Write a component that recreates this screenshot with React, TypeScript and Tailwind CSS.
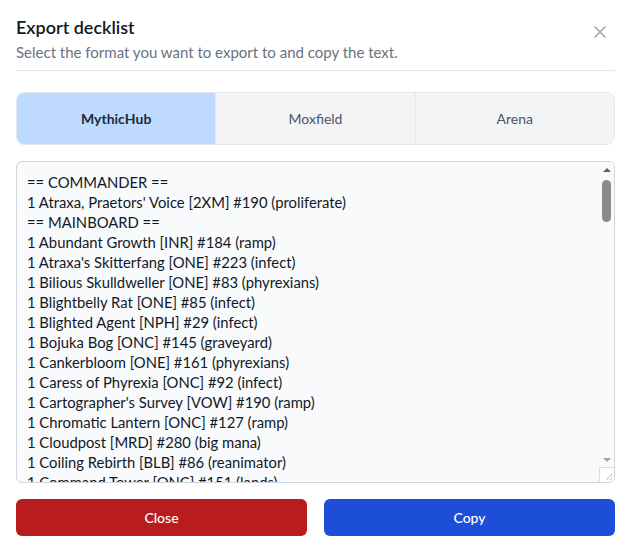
import { useEffect, useRef, useState } from "react";
import { X } from "lucide-react";

const lines = [
  "== COMMANDER ==",
  "1 Atraxa, Praetors' Voice [2XM] #190 (proliferate)",
  "== MAINBOARD ==",
  "1 Abundant Growth [INR] #184 (ramp)",
  "1 Atraxa's Skitterfang [ONE] #223 (infect)",
  "1 Bilious Skulldweller [ONE] #83 (phyrexians)",
  "1 Blightbelly Rat [ONE] #85 (infect)",
  "1 Blighted Agent [NPH] #29 (infect)",
  "1 Bojuka Bog [ONC] #145 (graveyard)",
  "1 Cankerbloom [ONE] #161 (phyrexians)",
  "1 Caress of Phyrexia [ONC] #92 (infect)",
  "1 Cartographer's Survey [VOW] #190 (ramp)",
  "1 Chromatic Lantern [ONC] #127 (ramp)",
  "1 Cloudpost [MRD] #280 (big mana)",
  "1 Coiling Rebirth [BLB] #86 (reanimator)",
  "1 Command Tower [ONC] #151 (lands)",
  "1 Contagion Clasp [SOM] #144 (proliferate)",
  "1 Contagion Engine [SOM] #145 (proliferate)",
  "1 Crawling Chorus [ONE] #7 (infect)",
  "1 Cultivate [ONC] #115 (ramp)",
  "1 Deep Analysis [ONC] #100 (draw)",
  "1 Drown in Ichor [ONE] #91 (removal)",
  "1 Evolution Sage [ONC] #116 (proliferate)",
  "1 Exotic Orchard [ONC] #153 (lands)",
  "1 Experimental Augury [ONE] #49 (proliferate)",
  "1 Flux Channeler [WAR] #52 (proliferate)",
  "1 Forest [ONE] #276 (lands)",
  "1 Forest [ONE] #277 (lands)",
  "1 Forest [ONE] #278 (lands)",
  "1 Fuel for the Cause [MOM] #57 (proliferate)",
  "1 Glistener Seer [ONE] #52 (infect)",
  "1 Glistening Deluge [ONE] #94 (removal)",
  "1 Glimmer Lens [ONE] #234 (draw)",
  "1 Grim Affliction [NPH] #60 (removal)",
  "1 Hydroid Krasis [RNA] #183 (draw)",
  "1 Ichor Rats [SOM] #67 (infect)",
  "1 Ichorclaw Myr [SOM] #171 (infect)",
  "1 Inexorable Tide [SOM] #35 (proliferate)",
  "1 Infectious Inquiry [ONE] #97 (infect)",
  "1 Island [ONE] #272 (lands)",
  "1 Island [ONE] #273 (lands)",
  "1 Karn's Bastion [WAR] #248 (lands)",
  "1 Llanowar Loamspeaker [DMU] #170 (ramp)",
  "1 Marsh Flats [ZEN] #219 (lands)",
  "1 Merciless Eviction [ONC] #142 (removal)",
  "1 Mindwhisker [ONE] #60 (infect)",
  "1 Myr Convert [ONE] #238 (ramp)",
  "1 Necrogen Communion [ONE] #101 (infect)",
  "1 Norn's Wellspring [ONE] #24 (draw)",
  "1 Opulent Palace [ONC] #156 (lands)",
  "1 Painful Truths [ONC] #103 (draw)",
  "1 Phyrexian Arena [ONE] #104 (draw)",
  "1 Phyrexian Swarmlord [NPH] #118 (infect)",
  "1 Plains [ONE] #267 (lands)",
  "1 Plaguemaw Beast [ONE] #174 (proliferate)",
  "1 Prologue to Phyresis [ONE] #63 (infect)",
  "1 Prairie Stream [ONC] #157 (lands)",
  "1 Rampant Growth [ONC] #122 (ramp)",
  "1 Sandsteppe Citadel [ONC] #159 (lands)",
  "1 Skrelv, Defector Mite [ONE] #33 (infect)",
  "1 Sol Ring [ONC] #130 (ramp)",
  "1 Swamp [ONE] #274 (lands)",
  "1 Swamp [ONE] #275 (lands)",
  "1 Swords to Plowshares [ONC] #73 (removal)",
  "1 Tainted Observer [ONE] #108 (proliferate)",
  "1 Tekuthal, Inquiry Dominus [MOM] #81 (proliferate)",
  "1 Temple of Malady [ONC] #163 (lands)",
  "1 Temple of Mystery [ONC] #164 (lands)",
  "1 Tezzeret's Gambit [NPH] #47 (draw)",
  "1 Thrummingbird [SOM] #47 (proliferate)",
  "1 Toxic Deluge [C13] #96 (removal)",
  "1 Venerated Rotpriest [ONE] #192 (infect)",
  "1 Viral Drake [NPH] #48 (infect)",
  "1 Vorinclex, Monstrous Raider [KHM] #199 (proliferate)",
  "1 White Sun's Twilight [ONE] #38 (reanimator)",
  "1 Windswept Heath [KTK] #248 (lands)",
  "1 Wooded Foothills [KTK] #249 (lands)",
  "1 Zopandrel, Hunger Dominus [MOM] #247 (phyrexians)",
  "== SIDEBOARD ==",
  "1 Anoint with Affliction [ONE] #1 (removal)",
  "1 Bloated Contaminator [ONE] #159 (infect)",
  "1 Branching Evolution [ONC] #110 (counters)",
  "1 Cyclonic Rift [ONC] #91 (removal)",
  "1 Deepglow Skate [ONC] #94 (counters)",
  "1 Doubling Season [ONC] #112 (counters)",
  "1 Fathom Mage [ONC] #105 (draw)",
  "1 Flooded Strand [KTK] #233 (lands)",
  "1 Grateful Apparition [WAR] #17 (proliferate)",
  "1 Hardened Scales [KTK] #133 (counters)",
  "1 Inspiring Call [ONC] #113 (draw)",
  "1 Kodama's Reach [ONC] #117 (ramp)",
  "1 Misty Rainforest [ZEN] #220 (lands)",
  "1 Ozolith, the Shattered Spire [ONC] #120 (counters)",
  "1 Polluted Delta [KTK] #239 (lands)",
  "1 Pestilent Syphoner [ONE] #105 (infect)",
  "1 Sword of Truth and Justice [MH1] #232 (equipment)",
  "1 Swan Song [THS] #65 (protection)",
  "1 Teferi's Protection [C17] #8 (protection)",
  "1 Thrun, Breaker of Silence [ONE] #186 (protection)",
  "1 Vraska, Betrayal's Sting [ONE] #115 (proliferate)",
  "1 Vishgraz, the Doomhive [ONC] #9 (infect)",
  "1 Wrenn and Seven [MID] #208 (ramp)",
];

function DeckText() {
  const ref = useRef<HTMLTextAreaElement>(null);
  const [bar, setBar] = useState({ top: 0, height: 42 });
  const track = 275;

  const measure = () => {
    const el = ref.current;
    if (!el) return;
    const ratio = el.clientHeight / el.scrollHeight;
    const usable = track - 6;
    const height = Math.max(20, Math.round(usable * ratio));
    const max = el.scrollHeight - el.clientHeight;
    const top = max > 0 ? Math.round(((usable - height) * el.scrollTop) / max) : 0;
    setBar({ top, height });
  };

  useEffect(measure, []);

  return (
    <div className="relative mt-4 h-[322px] overflow-hidden rounded-md border border-gray-300 bg-gray-50">
      <textarea
        ref={ref}
        readOnly
        onScroll={measure}
        value={lines.join("\n")}
        className="block h-full w-full resize-none bg-transparent py-[10px] pr-[25px] pl-[10px] text-[14.8px] leading-[20px] whitespace-pre text-gray-900 outline-none [scrollbar-width:none]"
        style={{ fontFamily: "Lato, 'Noto Sans', sans-serif" }}
      />

      {/* scrollbar */}
      <div className="absolute top-0 right-0 bottom-0 flex w-[15px] flex-col bg-[#fafafa]">
        <div className="flex h-[15px] items-center justify-center">
          <div className="h-0 w-0 border-x-[4px] border-b-[4px] border-x-transparent border-b-[#606060]" />
        </div>
        <div className="relative flex-1">
          <div
            className="absolute left-[3px] w-[9px] rounded-full bg-[#8a8a8a]"
            style={{ top: bar.top + 3, height: bar.height }}
          />
        </div>
        <div className="flex h-[15px] items-center justify-center">
          <div className="h-0 w-0 border-x-[4px] border-t-[4px] border-x-transparent border-t-[#a3a3a3]" />
        </div>
        <div className="relative h-[15px] border-t border-l border-[#dcdcdc] bg-white">
          <svg width="14" height="14" viewBox="0 0 14 14" className="absolute right-0 bottom-0">
            <path d="M12 6 L6 12 M12 9.5 L9.5 12" stroke="#777" strokeWidth="1" strokeDasharray="1 1" />
          </svg>
        </div>
      </div>
    </div>
  );
}

function App() {
  const [format, setFormat] = useState("MythicHub");
  const tabs = ["MythicHub", "Moxfield", "Arena"];

  return (
    <div
      className="flex h-[552px] w-[631px] flex-col bg-white px-4 pt-[13px]"
      style={{ fontFamily: "Lato, 'Noto Sans', sans-serif" }}
    >
      {/* Header */}
      <div className="flex items-start justify-between border-b border-gray-200 pb-[8px]">
        <div className="flex flex-col gap-[1px]">
          <h2 className="text-[18px] leading-[28px] font-semibold text-gray-900">Export decklist</h2>
          <p className="text-[15px] leading-[20px] text-gray-500">
            Select the format you want to export to and copy the text.
          </p>
        </div>
        <button className="mt-[7px] mr-[3px] flex h-6 w-6 items-center justify-center text-gray-400">
          <X size={20} strokeWidth={1.75} />
        </button>
      </div>

      {/* Format tabs */}
      <div className="mt-[21px] flex h-[53px] overflow-hidden rounded-lg border border-gray-200">
        {tabs.map((t, i) => (
          <button
            key={t}
            onClick={() => setFormat(t)}
            className={
              "flex-1 text-[14px] " +
              (i > 0 ? "border-l border-gray-200 " : "") +
              (format === t ? "bg-blue-200 font-bold text-gray-800" : "bg-gray-100 text-gray-600")
            }
          >
            {t}
          </button>
        ))}
      </div>

      {/* Decklist */}
      <DeckText />

      {/* Actions */}
      <div className="mt-4 flex gap-[17px]">
        <button className="h-[37px] flex-1 rounded-md bg-[#b91c1c] text-[14px] font-medium text-white">
          Close
        </button>
        <button className="h-[37px] flex-1 rounded-md bg-[#1d4ed8] text-[14px] font-medium text-white">
          Copy
        </button>
      </div>
    </div>
  );
}

export default App;
